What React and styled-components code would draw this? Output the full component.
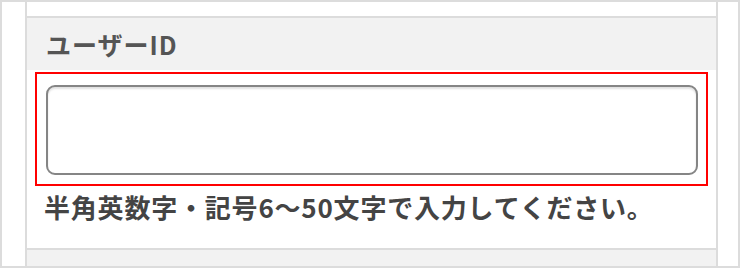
import React from "react";
import styled, { createGlobalStyle } from "styled-components";

const Global = createGlobalStyle`
  html, body { margin: 0; padding: 0; background: #fff; }
  body { font-family: "Noto Sans CJK JP", "Noto Sans", sans-serif; }
`;

const Frame = styled.div`
  box-sizing: border-box;
  width: 740px;
  height: 268px;
  border: 2px solid #dcdcdc;
  background: #fff;
  display: flex;
  padding: 0 20px 0 23px;
`;

const Column = styled.div`
  flex: 1;
  display: flex;
  flex-direction: column;
  border-left: 2px solid #dcdcdc;
  border-right: 2px solid #dcdcdc;
`;

const TopGap = styled.div`
  height: 14px;
  border-bottom: 2px solid #dcdcdc;
  flex: none;
`;

const LabelBand = styled.div`
  height: 52px;
  flex: none;
  background: #f2f2f2;
  display: flex;
  align-items: center;
  padding-left: 19px;
  font-size: 25px;
  font-weight: 700;
  color: #555;
  letter-spacing: 1px;
`;

const Body = styled.div`
  flex: 1;
  padding: 2px 8px 0 8px;
  display: flex;
  flex-direction: column;
  border-bottom: 2px solid #dcdcdc;
`;

const Highlight = styled.div`
  height: 114px;
  box-sizing: border-box;
  border: 2px solid #ff0000;
  padding: 11px 8px 9px 9px;
  display: flex;
`;

const Input = styled.input`
  flex: 1;
  box-sizing: border-box;
  border: 2px solid #858585;
  border-radius: 9px;
  background: #fff;
  box-shadow: inset 0 2px 2px rgba(0, 0, 0, 0.12);
  outline: none;
  font-size: 22px;
  padding: 0 10px;
`;

const Hint = styled.p`
  margin: 5px 0 0 9px;
  font-size: 26px;
  font-weight: 700;
  line-height: 32px;
  color: #444;
  letter-spacing: 0.8px;
  white-space: nowrap;
`;

const BottomBand = styled.div`
  height: 16px;
  flex: none;
  background: #f2f2f2;
`;

export default function App() {
  return (
    <>
      <Global />
      <Frame>
        <Column>
          <TopGap />
          <LabelBand>ユーザーID</LabelBand>
          <Body>
            <Highlight>
              <Input type="text" aria-label="ユーザーID" />
            </Highlight>
            <Hint>半角英数字・記号6〜50文字で入力してください。</Hint>
          </Body>
          <BottomBand />
        </Column>
      </Frame>
    </>
  );
}
